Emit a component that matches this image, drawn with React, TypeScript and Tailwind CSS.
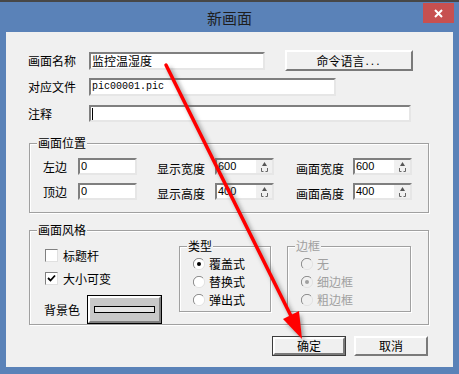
import React from "react";

const sunken =
  "border-2 border-t-[#7f7f7f] border-l-[#7f7f7f] border-r-[#e6e6e6] border-b-[#e6e6e6] bg-white";

function Input({ w, h = 18, value = "", mono = false, caret = false }: { w: number; h?: number; value?: string; mono?: boolean; caret?: boolean }) {
  return (
    <div className={`${sunken} flex items-center pl-[1px] overflow-hidden`} style={{ width: w, height: h }}>
      {caret ? <div className="w-[1px] h-[12px] bg-black" /> : null}
      <span
        className={
          mono
            ? "font-['Liberation_Mono',monospace] text-[10px] leading-none"
            : "text-[12px] leading-none"
        }
      >
        {value}
      </span>
    </div>
  );
}

function NumInput({ value }: { value: string }) {
  return (
    <div className={`${sunken} w-[59px] h-[17px] flex items-center pl-[1px]`}>
      <span className="font-['Liberation_Sans',sans-serif] text-[11px] leading-none">{value}</span>
    </div>
  );
}

function Spin({ value }: { value: string }) {
  return (
    <div className={`${sunken} w-[59px] h-[17px] flex`}>
      <div className="flex-1 flex items-center pl-[1px]">
        <span className="font-['Liberation_Sans',sans-serif] text-[11px] leading-none">{value}</span>
      </div>
      <div className="w-[16px] h-full bg-[#f0f0f0] flex flex-col items-center justify-center gap-[2px]">
        <svg width="5" height="4" viewBox="0 0 5 4">
          <polygon points="2.5,0 5,4 0,4" fill="#555" />
        </svg>
        <svg width="7" height="4" viewBox="0 0 7 4">
          <path d="M0.5 0 V3.5 H2.5 M6.5 0 V3.5 H4.5" stroke="#666" strokeWidth="1" fill="none" />
        </svg>
      </div>
    </div>
  );
}

function Label({ children, w, gray = false }: { children: React.ReactNode; w?: number; gray?: boolean }) {
  return (
    <span
      className={`inline-block shrink-0 text-[12px] leading-none whitespace-nowrap ${gray ? "text-[#a0a0a0]" : "text-black"}`}
      style={w ? { width: w } : undefined}
    >
      {children}
    </span>
  );
}

function Group({ title, w, h, gray = false, children, className = "" }: { title: string; w: number; h: number; gray?: boolean; children?: React.ReactNode; className?: string }) {
  return (
    <div
      className={`relative shrink-0 border border-[#a0a0a0] shadow-[inset_1px_1px_0_#ffffff,1px_1px_0_#ffffff] ${className}`}
      style={{ width: w, height: h }}
    >
      <span
        className={`absolute top-[-8px] left-[7px] px-[1px] bg-[#f0f0f0] text-[12px] leading-[14px] ${gray ? "text-[#a0a0a0]" : "text-black"}`}
      >
        {title}
      </span>
      {children}
    </div>
  );
}

function Checkbox({ checked, label }: { checked: boolean; label: string }) {
  return (
    <div className="flex items-center h-[13px]">
      <div className="w-[13px] h-[13px] border border-t-[#808080] border-l-[#808080] border-r-[#e0e0e0] border-b-[#e0e0e0] bg-white flex items-center justify-center">
        {checked ? (
          <svg width="9" height="9" viewBox="0 0 9 9">
            <path d="M1 4 L3.5 6.5 L8 1.5" stroke="#000" strokeWidth="1.8" fill="none" />
          </svg>
        ) : null}
      </div>
      <span className="ml-[5px] text-[12px] leading-none">{label}</span>
    </div>
  );
}

function Radio({ checked, label, disabled = false }: { checked: boolean; label: string; disabled?: boolean }) {
  return (
    <div className="flex items-center h-[18px]">
      <svg width="12" height="12" viewBox="0 0 12 12">
        <circle cx="6" cy="6" r="5.5" fill={disabled ? "#f0f0f0" : "#ffffff"} />
        <path d="M10 2 A5.5 5.5 0 0 0 2 10" stroke="#8a8a8a" strokeWidth="1" fill="none" />
        <path d="M2 10 A5.5 5.5 0 0 0 10 2" stroke="#e2e2e2" strokeWidth="1" fill="none" />
        {checked ? <circle cx="6" cy="6" r="2" fill={disabled ? "#a0a0a0" : "#000"} /> : null}
      </svg>
      <span className={`ml-[4px] text-[12px] leading-none ${disabled ? "text-[#a0a0a0]" : "text-black"}`}>{label}</span>
    </div>
  );
}

function Btn({ children, w, h, def = false }: { children: React.ReactNode; w: number; h: number; def?: boolean }) {
  return (
    <div className={def ? "border border-[#3c3c3c]" : ""} style={{ width: w, height: h }}>
      <div className="w-full h-full border-2 border-t-white border-l-white border-r-[#7a7a7a] border-b-[#7a7a7a] bg-[#f0f0f0] flex items-center justify-center text-[12px] leading-none">
        {children}
      </div>
    </div>
  );
}

export default function App() {
  return (
    <div className="w-[459px] h-[374px] bg-[#5a82b8] border-t-2 border-[#474747] flex flex-col relative overflow-hidden font-['Noto_Sans_CJK_SC','Liberation_Sans',sans-serif] text-black">
      {/* title bar */}
      <div className="h-[30px] relative flex items-center justify-center">
        <span className="text-[15px] leading-none text-[#1e1e1e]">新画面</span>
        <div className="absolute right-[5px] top-[1px] w-[31px] h-[20px] bg-[#c75050] flex items-center justify-center">
          <svg width="9" height="9" viewBox="0 0 9 9">
            <path d="M1 1 L8 8 M8 1 L1 8" stroke="#fff" strokeWidth="2" />
          </svg>
        </div>
      </div>

      {/* client */}
      <div className="mx-[6px] h-[335px] bg-[#f0f0f0] flex flex-col">
        <div className="pl-[22px] pt-[18px] flex flex-col">
          <div className="flex items-center h-[21px]">
            <Label w={61}>画面名称</Label>
            <Input w={176} h={18} value="监控温湿度" />
            <div className="ml-[20px]">
              <Btn w={128} h={21}>
                <span>命令语言</span>
                <span className="font-['Liberation_Sans',sans-serif] tracking-[2px] ml-[1px]">...</span>
              </Btn>
            </div>
          </div>
          <div className="flex items-center h-[18px] mt-[7px]">
            <Label w={61}>对应文件</Label>
            <Input w={247} h={18} value="pic00001.pic" mono />
          </div>
          <div className="flex items-center h-[17px] mt-[9px]">
            <Label w={61}>注释</Label>
            <Input w={322} h={17} caret />
          </div>
        </div>

        <Group title="画面位置" w={400} h={70} className="ml-[23px] mt-[21px]">
          <div className="pt-[14px] pl-[13px] flex flex-col gap-[8px]">
            <div className="flex items-center h-[17px]">
              <Label w={35}>左边</Label>
              <NumInput value="0" />
              <div className="ml-[20px]"><Label w={58}>显示宽度</Label></div>
              <Spin value="600" />
              <div className="ml-[22px]"><Label w={57}>画面宽度</Label></div>
              <Spin value="600" />
            </div>
            <div className="flex items-center h-[17px]">
              <Label w={35}>顶边</Label>
              <NumInput value="0" />
              <div className="ml-[20px]"><Label w={58}>显示高度</Label></div>
              <Spin value="400" />
              <div className="ml-[22px]"><Label w={57}>画面高度</Label></div>
              <Spin value="400" />
            </div>
          </div>
        </Group>

        <Group title="画面风格" w={400} h={95} className="ml-[23px] mt-[17px]">
          <div className="pt-[15px] pl-[15px] flex items-start">
            <div className="w-[134px] shrink-0 mt-[3px] flex flex-col">
              <Checkbox checked={false} label="标题杆" />
              <div className="mt-[10px]">
                <Checkbox checked label="大小可变" />
              </div>
              <div className="mt-[10px] flex items-center">
                <span className="w-[43px] text-[12px] leading-none -ml-[1px]">背景色</span>
                <div className="w-[75px] h-[29px] border border-black p-0">
                  <div className="w-full h-full border-2 border-t-white border-l-white border-r-[#808080] border-b-[#808080] bg-[#c8c8c8] flex items-center justify-center">
                    <div className="w-[61px] h-[7px] border border-black bg-[#e4e4e4]" />
                  </div>
                </div>
              </div>
            </div>
            <Group title="类型" w={92} h={66}>
              <div className="pt-[8px] pl-[13px] flex flex-col">
                <Radio checked label="覆盖式" />
                <Radio checked={false} label="替换式" />
                <Radio checked={false} label="弹出式" />
              </div>
            </Group>
            <Group title="边框" w={124} h={66} gray className="ml-[16px]">
              <div className="pt-[8px] pl-[13px] flex flex-col">
                <Radio checked={false} disabled label="无" />
                <Radio checked disabled label="细边框" />
                <Radio checked={false} disabled label="粗边框" />
              </div>
            </Group>
          </div>
        </Group>

        <div className="mt-[11px] pr-[25px] flex justify-end gap-[8px]">
          <Btn w={74} h={20} def>确定</Btn>
          <Btn w={74} h={20}>取消</Btn>
        </div>
      </div>

      {/* red arrow annotation overlay */}
      <svg className="absolute left-0 top-0 pointer-events-none" width="459" height="374" viewBox="0 -2 459 374">
        <defs>
          <filter id="blur" x="-20%" y="-20%" width="140%" height="140%">
            <feGaussianBlur stdDeviation="2" />
          </filter>
        </defs>
        <g transform="translate(3,3)" filter="url(#blur)" opacity="0.55">
          <line x1="166" y1="61" x2="291" y2="313" stroke="#555" strokeWidth="4" />
          <polygon points="302,335 298,308 283,316" fill="#555" />
        </g>
        <line x1="166" y1="61" x2="292" y2="314" stroke="#ff0000" strokeWidth="3.5" strokeLinecap="round" />
        <polygon points="302,335 299,307 283,315" fill="#ff0000" />
      </svg>
    </div>
  );
}
